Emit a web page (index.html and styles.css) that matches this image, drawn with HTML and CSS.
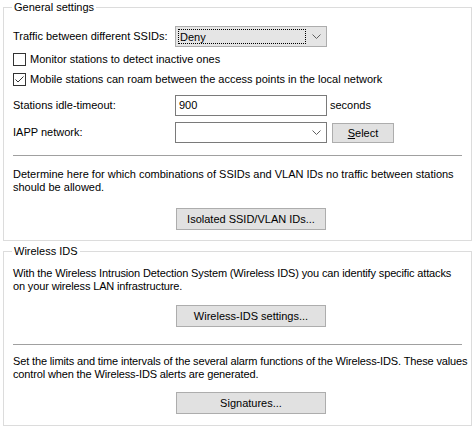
FILE: index.html
```html
<!DOCTYPE html>
<html>
<head>
<meta charset="utf-8">
<link rel="stylesheet" href="styles.css">
</head>
<body>
<fieldset class="group group-general">
  <legend class="legend">General settings</legend>
  <div class="row row-traffic">
    <span class="label">Traffic between different SSIDs:</span>
    <div class="combo combo-list">
      <span class="focus">Deny</span>
      <svg class="chev" width="9" height="6" viewBox="0 0 9 6"><path d="M0.5 0.5 L4.5 4.5 L8.5 0.5" fill="none" stroke="#606060" stroke-width="1"/></svg>
    </div>
  </div>
  <div class="check check-first"><span class="box"></span><span>Monitor stations to detect inactive ones</span></div>
  <div class="check"><span class="box"><svg width="11" height="11" viewBox="0 0 11 11"><path d="M1.5 5.5 L4 8 L9.5 2.5" fill="none" stroke="#333" stroke-width="1"/></svg></span><span>Mobile stations can roam between the access points in the local network</span></div>
  <div class="row row-timeout">
    <span class="label">Stations idle-timeout:</span>
    <div class="input">900</div>
    <span class="unit">seconds</span>
  </div>
  <div class="row row-iapp">
    <span class="label">IAPP network:</span>
    <div class="combo combo-edit">
      <svg class="chev" width="9" height="6" viewBox="0 0 9 6"><path d="M0.5 0.5 L4.5 4.5 L8.5 0.5" fill="none" stroke="#606060" stroke-width="1"/></svg>
    </div>
    <div class="btn btn-select"><u>S</u>elect</div>
  </div>
  <div class="sep"></div>
  <p class="desc">Determine here for which combinations of SSIDs and VLAN IDs no traffic between stations<br>should be allowed.</p>
  <div class="btn-row"><div class="btn btn-wide">Isolated SSID/VLAN IDs...</div></div>
</fieldset>
<fieldset class="group group-ids">
  <legend class="legend">Wireless IDS</legend>
  <p class="desc desc-ids desc-first">With the Wireless Intrusion Detection System (Wireless IDS) you can identify specific attacks<br>on your wireless LAN infrastructure.</p>
  <div class="btn-row btn-row-ids"><div class="btn btn-wide">Wireless-IDS settings...</div></div>
  <div class="sep sep-ids"></div>
  <p class="desc desc-ids desc-alarm">Set the limits and time intervals of the several alarm functions of the Wireless-IDS. These values<br>control when the Wireless-IDS alerts are generated.</p>
  <div class="btn-row btn-row-last"><div class="btn btn-wide">Signatures...</div></div>
</fieldset>
</body>
</html>
```
FILE: styles.css
```css
html, body {
  margin: 0;
  padding: 0;
  background: #ffffff;
}
body {
  font-family: "Liberation Sans", Arial, sans-serif;
  font-size: 11px;
  line-height: 13px;
  color: #000;
  padding-top: 1px;
}
.group {
  margin: 0 4px 0 3px;
  border: 1px solid #dcdcdc;
  padding: 0 9px 0 9px;
  min-width: 0;
  box-sizing: border-box;
}
.group-general {
  height: 240px;
  padding-top: 10px;
}
.group-ids {
  margin-top: 4px;
  height: 181px;
  padding-top: 7px;
}
.legend {
  padding: 0 2px;
  margin-left: -1px;
}
.row {
  display: flex;
  align-items: center;
}
.label {
  width: 162px;
  flex: none;
}
.row-traffic {
  height: 21px;
  margin-top: 2px;
}
.combo {
  width: 152px;
  height: 21px;
  box-sizing: border-box;
  display: flex;
  align-items: center;
}
.combo-list {
  background: #e5e5e5;
  border: 1px solid #adadad;
  padding: 0 2px;
}
.combo-edit {
  background: #fff;
  border: 1px solid #7a7a7a;
  justify-content: flex-end;
}
.focus {
  flex: 1;
  height: 15px;
  line-height: 14px;
  border: 1px dotted #000;
  padding-left: 1px;
  box-sizing: border-box;
  margin-right: 6px;
}
.chev {
  display: block;
  margin-right: 5px;
  flex: none;
}
.combo-list .chev {
  margin-right: 3px;
}
.check {
  display: flex;
  align-items: center;
  height: 13px;
  margin-top: 7px;
}
.check-first { margin-top: 6px; }
.box {
  width: 13px;
  height: 13px;
  box-sizing: border-box;
  border: 1px solid #333;
  background: #fff;
  margin-right: 4px;
  flex: none;
  display: flex;
  align-items: center;
  justify-content: center;
}
.box svg { display: block; }
.row-timeout {
  margin-top: 9px;
  height: 21px;
}
.input {
  width: 152px;
  height: 21px;
  box-sizing: border-box;
  border: 1px solid #7a7a7a;
  background: #fff;
  padding-left: 3px;
  line-height: 19px;
}
.unit {
  margin-left: 3px;
}
.row-iapp {
  margin-top: 6px;
  height: 21px;
}
.btn {
  background: #e1e1e1;
  border: 1px solid #adadad;
  box-sizing: border-box;
  text-align: center;
  height: 21px;
  line-height: 19px;
}
.btn-select {
  width: 62px;
  height: 20px;
  line-height: 18px;
  margin-left: 5px;
}
.sep {
  height: 1px;
  background: #a0a0a0;
  margin-top: 12px;
}
.desc {
  margin: 12px 0 0 0;
  white-space: nowrap;
}
.desc-ids {
  letter-spacing: -0.14px;
}
.desc-first {
  margin-top: 2px;
}
.desc-alarm {
  margin-top: 10px;
}
.btn-row {
  margin-top: 14px;
  padding-left: 163px;
}
.btn-row-ids {
  margin-top: 12px;
}
.btn-row-last {
  margin-top: 11px;
}
.btn-wide {
  width: 150px;
  height: 22px;
  line-height: 20px;
}
.sep-ids {
  margin-top: 17px;
}
```
